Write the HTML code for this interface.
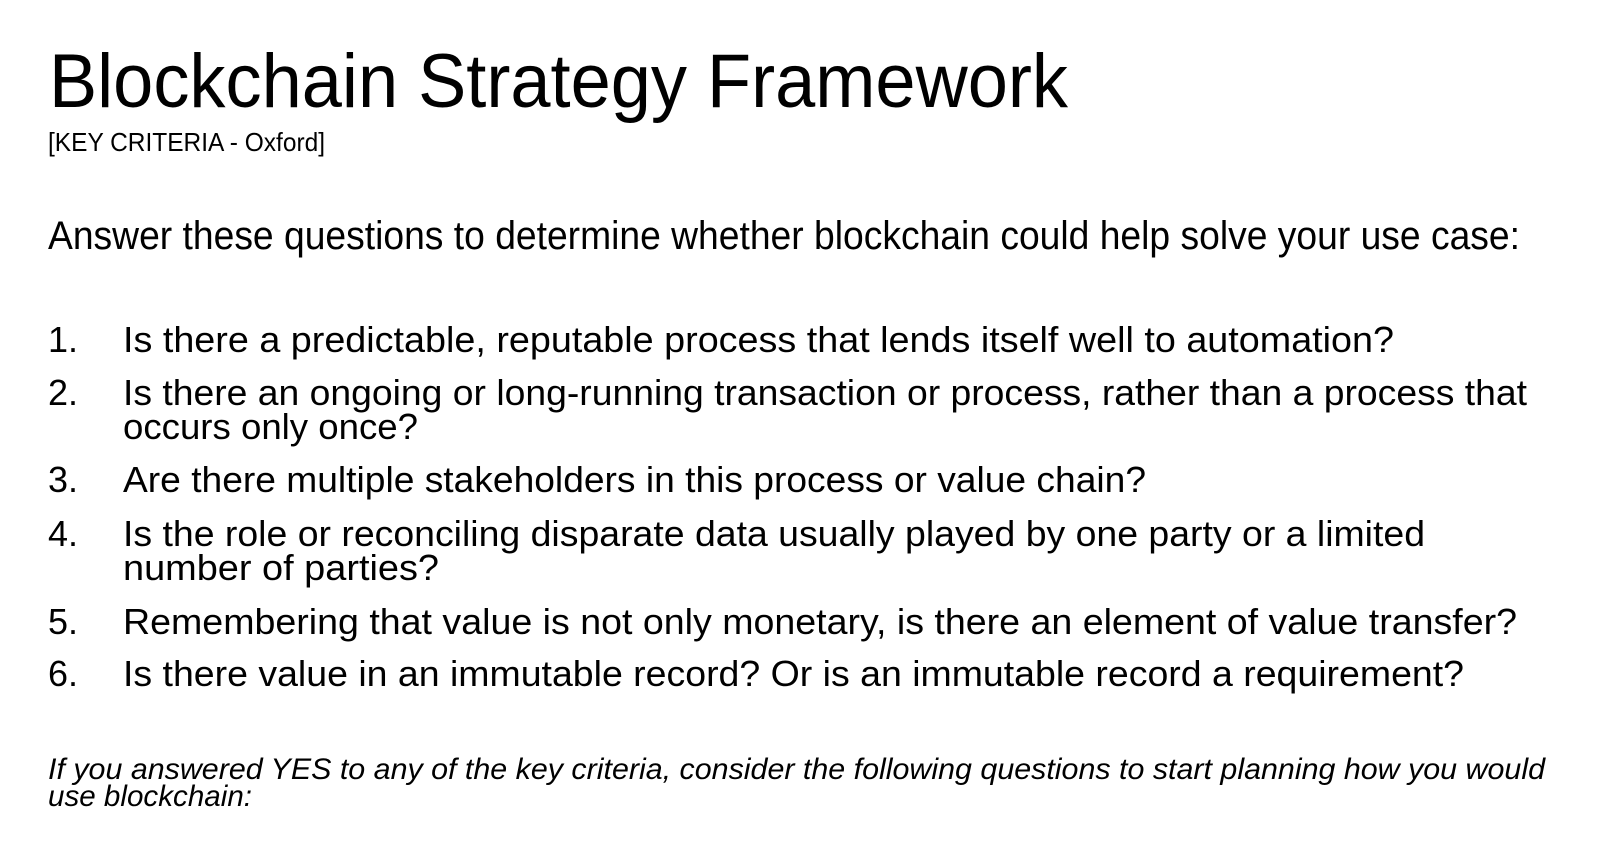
<!DOCTYPE html>
<html><head><meta charset="utf-8"><style>
html,body{margin:0;padding:0;background:#fff;}
svg{display:block;}
text{font-family:"Liberation Sans",sans-serif;fill:#000;}
</style></head><body>
<svg width="1608" height="848" viewBox="0 0 1608 848" xmlns="http://www.w3.org/2000/svg">
<text x="49" y="107" font-size="76" textLength="1019" lengthAdjust="spacingAndGlyphs">Blockchain Strategy Framework</text>
<text x="48" y="151" font-size="26" fill="#333" textLength="277" lengthAdjust="spacingAndGlyphs">[KEY CRITERIA - Oxford]</text>
<text x="48" y="249" font-size="40" textLength="1472" lengthAdjust="spacingAndGlyphs">Answer these questions to determine whether blockchain could help solve your use case:</text>
<g font-size="36">
<text x="48" y="352">1.</text>
<text x="123" y="352" textLength="1271" lengthAdjust="spacingAndGlyphs">Is there a predictable, reputable process that lends itself well to automation?</text>
<text x="48" y="405">2.</text>
<text x="123" y="405" textLength="1404" lengthAdjust="spacingAndGlyphs">Is there an ongoing or long-running transaction or process, rather than a process that</text>
<text x="123" y="439" textLength="295" lengthAdjust="spacingAndGlyphs">occurs only once?</text>
<text x="48" y="492">3.</text>
<text x="123" y="492" textLength="1023" lengthAdjust="spacingAndGlyphs">Are there multiple stakeholders in this process or value chain?</text>
<text x="48" y="546">4.</text>
<text x="123" y="546" textLength="1302" lengthAdjust="spacingAndGlyphs">Is the role or reconciling disparate data usually played by one party or a limited</text>
<text x="123" y="580" textLength="316" lengthAdjust="spacingAndGlyphs">number of parties?</text>
<text x="48" y="634">5.</text>
<text x="123" y="634" textLength="1394" lengthAdjust="spacingAndGlyphs">Remembering that value is not only monetary, is there an element of value transfer?</text>
<text x="48" y="686">6.</text>
<text x="123" y="686" textLength="1341" lengthAdjust="spacingAndGlyphs">Is there value in an immutable record? Or is an immutable record a requirement?</text>
</g>
<g font-size="30" font-style="italic">
<text x="48" y="779" textLength="1497" lengthAdjust="spacingAndGlyphs">If you answered YES to any of the key criteria, consider the following questions to start planning how you would</text>
<text x="48" y="806" textLength="204" lengthAdjust="spacingAndGlyphs">use blockchain:</text>
</g>
</svg>
</body></html>
